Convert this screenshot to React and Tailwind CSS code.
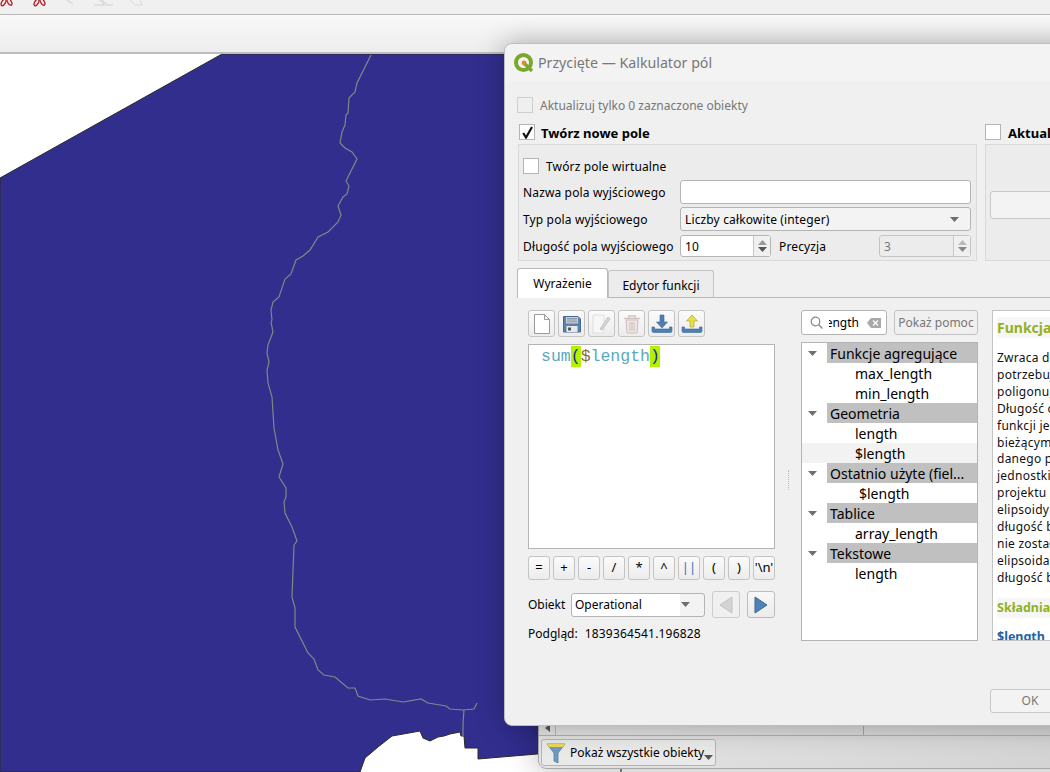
import React from "react";

const MAP_POLY = "222,54 1050,54 1050,754 537,754 478,759 478,748 465,748 464,736 461,736 460,732 450,734 444,736 438,737 430,741 423,738 420,731 392,736 378,747 365,758 360,772 0,772 0,178";
const BORDER = "371,55 365,67 357,83 355,92 349,98 348,113 346,115 345,125 342,132 340,143 345,148 352,152 357,159 346,181 349,186 347,194 343,197 338,206 341,215 338,222 328,232 318,237 310,250 303,256 296,260 291,274 285,279 279,297 273,302 271,310 272,320 271,322 273,332 268,345 267,353 269,362 267,370 268,383 272,397 274,428 278,450 283,464 279,477 286,488 286,497 284,502 285,513 292,527 297,541 294,545 292,597 295,608 295,627 308,653 314,659 318,670 324,675 335,677 348,688 355,688 358,696 370,700 385,699 403,702 421,699 428,703 446,706 450,709 463,710 474,709 477,703";
const BRANCH = "464,710 463,723 463,736";

const HELP_LINES = [
  "Zwraca długość linii. Jeżeli",
  "potrzebujesz długości obwodu",
  "poligonu, użyj $perimeter.",
  "Długość obliczona przez tę",
  "funkcji jest zgodna z",
  "bieżącymi ustawieniami",
  "danego projektu",
  "jednostki długości",
  "projektu i",
  "elipsoidy",
  "długość będzie",
  "nie została",
  "elipsoida",
  "długość będzie",
];

const TREE = [
  { label: "Funkcje agregujące", items: [{ t: "max_length" }, { t: "min_length" }] },
  { label: "Geometria", items: [{ t: "length" }, { t: "$length", hover: true }] },
  { label: "Ostatnio użyte (fiel...", items: [{ t: "$length", recent: true }] },
  { label: "Tablice", items: [{ t: "array_length" }] },
  { label: "Tekstowe", items: [{ t: "length" }] },
];

const CALC = ["=", "+", "-", "/", "*", "^", "||", "(", ")", "'\\n'"];

const Checkbox = ({ checked, muted }) => (
  <span className={`flex h-4 w-4 shrink-0 items-center justify-center border ${muted ? "border-[#cfcfcf] bg-[#efefef]" : "border-[#b4b4b4] bg-white"}`}>
    {checked && (
      <svg width="13" height="13" viewBox="0 0 13 13">
        <path d="M2.2 7 L5 11.5 L11 1" fill="none" stroke="#111" strokeWidth="2.2" />
      </svg>
    )}
  </span>
);

const Arrow = ({ up, color = "#6e6e6e" }) => (
  <svg width="9" height="5" viewBox="0 0 9 5">
    <path d={up ? "M0 5 L4.5 0 L9 5 Z" : "M0 0 L9 0 L4.5 5 Z"} fill={color} />
  </svg>
);

const SpinBox = ({ value, width, disabled }) => (
  <div className={`flex h-[22px] items-stretch rounded-[3px] border ${disabled ? "border-[#c4c4c4] bg-[#ececec] text-[#777]" : "border-[#b4b4b4] bg-white text-black"} ${width}`}>
    <span className="flex-1 pl-[4px] leading-[22px]">{value}</span>
    <span className="flex w-[17px] flex-col items-center justify-center gap-[2px] border-l border-[#c8c8c8] bg-[#f0f0f0]">
      <Arrow up color={disabled ? "#bbb" : "#999"} />
      <Arrow color={disabled ? "#888" : "#555"} />
    </span>
  </div>
);

const ToolButton = ({ children }) => (
  <button type="button" className="flex h-[27px] w-[27px] items-center justify-center rounded-[3px] border border-[#c4c4c4] bg-gradient-to-b from-[#fbfbfb] to-[#ececec]">
    {children}
  </button>
);

const SaveIcon = () => (
  <svg width="18" height="18" viewBox="0 0 18 18">
    <path d="M0.5 1.5 H15 L17.5 4 V17 H0.5 Z" fill="#5b82ac" stroke="#456b94" />
    <rect x="3" y="2" width="12" height="6.5" fill="#c9d0d8" />
    <path d="M4 3.5 H14 M4 5 H14 M4 6.8 H14" stroke="#7f8b98" strokeWidth="0.8" />
    <rect x="3.5" y="11" width="11" height="6" fill="#e8e8e8" />
    <rect x="5" y="12.5" width="3" height="3" fill="#555" />
  </svg>
);

const TrayIcon = ({ children }) => (
  <svg width="22" height="20" viewBox="0 0 22 20">
    {children}
    <path d="M1 13 V17 Q1 18.5 2.5 18.5 H19.5 Q21 18.5 21 17 V13 H18.5 V15 H3.5 V13 Z" fill="#4c7fb4" stroke="#3d6892" strokeWidth="0.6" />
  </svg>
);

const LoopGlyph = ({ x }) => (
  <g transform={`translate(${x} 0)`} fill="none" stroke="#b2272b" strokeWidth="1.4">
    <ellipse cx="3.5" cy="2.5" rx="1.8" ry="3.6" transform="rotate(30 3.5 2.5)" />
    <ellipse cx="9.5" cy="2" rx="1.8" ry="3.6" transform="rotate(-30 9.5 2)" />
  </g>
);

const App = () => {
  return (
    <div className="relative flex h-[772px] w-[1050px] flex-col overflow-hidden bg-white font-['Noto_Sans',sans-serif] text-[12px] text-black">
      {/* main window toolbars */}
      <div className="relative h-[15px] shrink-0 border-b border-[#b9b9b9] bg-[#f0f0f0]">
        <svg width="150" height="14" viewBox="0 0 150 14" className="absolute left-0 top-0">
          <LoopGlyph x={0} />
          <LoopGlyph x={33} />
          <path d="M67 0 L73 4" stroke="#d8d8d8" strokeWidth="1.2" fill="none" />
          <path d="M94 5 H113 M103 0 V5 M99 0 L107 4" stroke="#d2d2d2" strokeWidth="1" fill="none" />
          <path d="M130 0 L135 5 H142 L140 0" stroke="#dadada" strokeWidth="1" fill="none" />
        </svg>
      </div>
      <div className="h-[39px] shrink-0 border-b-2 border-[#bdbdbd] bg-gradient-to-b from-[#f9f9f9] to-[#ededed]" />

      {/* map canvas */}
      <div className="flex-1 bg-white">
        <svg width="1050" height="718" viewBox="0 54 1050 718" className="block">
          <polygon points={MAP_POLY} fill="#312e8e" stroke="#2a2a2a" strokeWidth="1" />
          <polyline points={BORDER} fill="none" stroke="#7c8a86" strokeWidth="1.2" />
          <polyline points={BRANCH} fill="none" stroke="#7c8a86" strokeWidth="1.2" />
          <path d="M621 769 V772" stroke="#111" strokeWidth="1" />
        </svg>
      </div>

      {/* attribute table window, behind the dialog */}
      <div className="absolute left-[538px] top-[700px] h-[69px] w-[560px] rounded-bl-[8px] border border-[#a8a8a8] bg-gradient-to-r from-[#e4e4e4] to-[#d2d2d2] shadow-[0_0_30px_rgba(0,0,0,0.3)]">
        <div className="flex h-[35px] border-b border-[#b0b0b0]">
          <div className="flex w-[17px] items-end justify-center border-r border-[#b8b8b8] pb-[3px]">
            <svg width="5" height="8" viewBox="0 0 5 8"><path d="M5 0 V8 L0 4 Z" fill="#555" /></svg>
          </div>
          <div className="w-[308px] border-r border-[#a8a8a8]" />
        </div>
        <div className="pl-[2px] pt-[3px]">
          <button type="button" className="relative flex h-[27px] w-[175px] items-center rounded-[3px] border border-[#b4b4b4] bg-[#e9e9e9] pl-[5px]">
            <svg width="18" height="20" viewBox="0 0 18 20" className="shrink-0">
              <path d="M0 1 H18 L11 10 V20 L7 18 V10 Z" fill="#6f9bc4" stroke="#4a7397" strokeWidth="0.7" />
              <path d="M0 1 H18 L16 4 H2 Z" fill="#ecd75c" />
            </svg>
            <span className="ml-[5px] whitespace-nowrap pt-px">Pokaż wszystkie obiekty</span>
            <span className="absolute bottom-[5px] right-[2px]"><Arrow color="#555" /></span>
          </button>
        </div>
      </div>

      {/* field calculator dialog */}
      <div className="absolute left-[504px] top-[43px] flex h-[683px] w-[720px] flex-col rounded-l-[8px] border border-[#bdbdbd] bg-[#f0f0f0] shadow-[0_0_28px_rgba(0,0,0,0.3)]">
        <div className="flex h-[37px] shrink-0 items-center rounded-tl-[8px] bg-[#f3f3f3] pl-[8px]">
          <svg width="22" height="22" viewBox="0 0 22 22">
            <circle cx="10.5" cy="10.5" r="7.5" fill="none" stroke="#79a82a" strokeWidth="4" />
            <path d="M11 11 L19 19" stroke="#79a82a" strokeWidth="3.4" />
            <circle cx="11" cy="11" r="2.4" fill="#e08a2b" />
          </svg>
          <span className="ml-[3px] text-[14.2px] text-[#787878]">Przycięte — Kalkulator pól</span>
        </div>

        <div className="flex flex-col pl-[12px] pt-[16px]">
          <div className="flex h-4 items-center gap-[7px] text-[#777]">
            <Checkbox muted />
            <span className="pt-[2px]">Aktualizuj tylko 0 zaznaczone obiekty</span>
          </div>

          <div className="ml-[1px] mt-[11px] flex gap-[8px]">
            <div className="flex w-[459px] flex-col">
              <div className="ml-[1px] flex h-4 items-center gap-[6px] font-bold">
                <Checkbox checked />
                <span className="pt-[3px] text-[13px]">Twórz nowe pole</span>
              </div>
              <div className="mt-[4px] flex h-[117px] flex-col border border-[#d9d9d9] bg-[#ececec] pl-[4px] pt-[13px] tracking-[0.14px]">
                <div className="flex h-4 items-center gap-[7px]">
                  <Checkbox />
                  <span className="pt-[2px]">Twórz pole wirtualne</span>
                </div>
                <div className="mt-[6px] flex h-6 items-center">
                  <span className="w-[157px] pt-[2px]">Nazwa pola wyjściowego</span>
                  <div className="h-6 w-[291px] rounded-[3px] border border-[#b4b4b4] bg-white" />
                </div>
                <div className="mt-[3px] flex h-6 items-center">
                  <span className="w-[157px] pt-[2px]">Typ pola wyjściowego</span>
                  <div className="flex h-6 w-[291px] items-center justify-between rounded-[3px] border border-[#b4b4b4] bg-[#f3f3f3] pl-[4px] pr-[11px]">
                    <span className="pt-[2px]">Liczby całkowite (integer)</span>
                    <Arrow />
                  </div>
                </div>
                <div className="mt-[4px] flex h-[22px] items-center">
                  <span className="w-[157px] whitespace-nowrap pt-[2px]">Długość pola wyjściowego</span>
                  <SpinBox value="10" width="w-[91px]" />
                  <span className="ml-[8px] w-[100px] pt-[2px]">Precyzja</span>
                  <SpinBox value="3" width="w-[92px]" disabled />
                </div>
              </div>
            </div>
            <div className="flex w-[230px] flex-col">
              <div className="flex h-4 items-center gap-[7px] font-bold">
                <Checkbox />
                <span className="pt-[3px] text-[13px]">Aktualizuj istniejące pole</span>
              </div>
              <div className="mt-[4px] flex h-[117px] flex-col justify-center border border-[#d9d9d9] bg-[#ececec] pl-[4px] pt-[4px]">
                <div className="h-[28px] w-[220px] rounded-[3px] border border-[#c8c8c8] bg-[#f3f3f3]" />
              </div>
            </div>
          </div>

          {/* tabs */}
          <div className="mt-[7px] flex h-[30px] items-end border-b border-[#b9b9b9]">
            <div className="-mb-px flex h-[30px] w-[91px] items-center justify-center rounded-t-[3px] border border-b-0 border-[#b9b9b9] bg-white pt-px">Wyrażenie</div>
            <div className="flex h-[27px] w-[106px] items-center justify-center rounded-t-[3px] border border-b-0 border-[#c4c4c4] bg-[#ececec] pt-[3px]">Edytor funkcji</div>
          </div>

          <div className="flex pl-[11px] pt-[12px]">
            <div className="flex w-[247px] flex-col">
              <div className="flex gap-[3px]">
                <ToolButton>
                  <svg width="16" height="20" viewBox="0 0 16 20">
                    <path d="M0.5 0.5 H10.5 L15.5 5.5 V19.5 H0.5 Z M10.5 0.5 V5.5 H15.5" fill="#fff" stroke="#9a9a9a" />
                  </svg>
                </ToolButton>
                <ToolButton><SaveIcon /></ToolButton>
                <ToolButton>
                  <svg width="20" height="20" viewBox="0 0 20 20">
                    <path d="M1 1 H12 V19 H1 Z" fill="#f7f7f7" stroke="#dedede" />
                    <path d="M8 15 L16 3 L18 5 L10 16 Z" fill="#d6d6d6" stroke="#c4c4c4" />
                  </svg>
                </ToolButton>
                <ToolButton>
                  <svg width="18" height="20" viewBox="0 0 18 20">
                    <path d="M1 4.5 H17 M6 4 V2 H12 V4" stroke="#d2c4c2" strokeWidth="1.5" fill="none" />
                    <path d="M3 6 H15 L14 19 H4 Z" fill="#eee6e4" stroke="#cdbfbd" />
                    <path d="M7 8 V17 M9 8 V17 M11 8 V17" stroke="#cdbfbd" />
                  </svg>
                </ToolButton>
                <ToolButton>
                  <TrayIcon>
                    <path d="M9 1 H13 V8 H16.5 L11 14 L5.5 8 H9 Z" fill="#4c7fb4" stroke="#3d6892" strokeWidth="0.6" />
                  </TrayIcon>
                </ToolButton>
                <ToolButton>
                  <TrayIcon>
                    <path d="M9 13 H13 V7 H16.5 L11 1 L5.5 7 H9 Z" fill="#e6df4a" stroke="#a49d2a" strokeWidth="0.6" />
                  </TrayIcon>
                </ToolButton>
              </div>

              <div className="mt-[7px] flex h-[205px] items-start border border-[#b4b4b4] bg-white pl-[12px] pt-px font-['Liberation_Mono',monospace] text-[16.5px] leading-[21px] text-[#5aa9bd]">
                <span>sum</span>
                <span className="bg-[#b2f400] text-[#2323a8]">(</span>
                <span className="text-[#8a6a40]">$</span>
                <span>length</span>
                <span className="bg-[#b2f400] text-[#2323a8]">)</span>
              </div>

              <div className="mt-[7px] flex gap-[3px]">
                {CALC.map((c) => (
                  <button key={c} type="button" className={`flex h-[24px] w-[22px] items-center justify-center rounded-[3px] border border-[#c4c4c4] bg-gradient-to-b from-[#fbfbfb] to-[#ececec] text-[13px] ${c === "||" ? "text-[#2f72b5]" : ""} ${c === "'\\n'" ? "text-[11.5px]" : ""}`}>
                    {c}
                  </button>
                ))}
              </div>

              <div className="mt-[11px] flex h-[27px] items-center">
                <span className="w-[43px]">Obiekt</span>
                <div className="flex h-[24px] w-[134px] items-center justify-between rounded-[3px] border border-[#b4b4b4] bg-[#f3f3f3] pr-[14px]">
                  <span className="flex h-full w-[108px] items-center rounded-l-[3px] bg-white pl-[3px]">Operational</span>
                  <Arrow />
                </div>
                <button type="button" className="ml-[7px] flex h-[27px] w-[28px] items-center justify-center rounded-[3px] border border-[#cccccc] bg-[#f0f0f0]">
                  <svg width="14" height="18" viewBox="0 0 14 18"><path d="M13 1 V17 L1 9 Z" fill="#d4d4d4" stroke="#c2c2c2" /></svg>
                </button>
                <button type="button" className="ml-[7px] flex h-[27px] w-[28px] items-center justify-center rounded-[3px] border border-[#bcbcbc] bg-gradient-to-b from-[#f8f8f8] to-[#ececec]">
                  <svg width="14" height="18" viewBox="0 0 14 18"><path d="M1 1 V17 L13 9 Z" fill="#4f82b8" stroke="#3d6790" /></svg>
                </button>
              </div>

              <div className="mt-[7px] flex gap-[7px] leading-[17px]">
                <span>Podgląd:</span>
                <span className="tracking-[0.18px]">1839364541.196828</span>
              </div>
            </div>

            {/* splitter */}
            <div className="flex w-[26px] shrink-0 justify-center pt-[160px]">
              <div className="h-[20px] border-l border-dotted border-[#bdbdbd]" />
            </div>

            <div className="flex w-[177px] shrink-0 flex-col">
              <div className="flex gap-[7px]">
                <div className="flex h-[25px] w-[86px] items-center rounded-[3px] border border-[#b4b4b4] bg-white pl-[8px]">
                  <svg width="13" height="13" viewBox="0 0 13 13" className="shrink-0">
                    <circle cx="5.5" cy="5.5" r="4.3" fill="none" stroke="#8a8a8a" strokeWidth="1.2" />
                    <path d="M8.6 8.6 L12.4 12.4" stroke="#8a8a8a" strokeWidth="1.4" />
                  </svg>
                  <div className="ml-[6px] flex w-[30px] justify-end overflow-hidden">
                    <span>length</span>
                  </div>
                  <svg width="14" height="10" viewBox="0 0 14 10" className="ml-[8px] shrink-0">
                    <path d="M0 5 L4 0 H14 V10 H4 Z" fill="#a8a8a8" />
                    <path d="M6 2.5 L11 7.5 M11 2.5 L6 7.5" stroke="#fff" strokeWidth="1.2" />
                  </svg>
                </div>
                <button type="button" className="h-[25px] w-[84px] whitespace-nowrap rounded-[3px] border border-[#c4c4c4] bg-[#f0f0f0] text-[#777]">Pokaż pomoc</button>
              </div>

              <div className="mt-[7px] h-[299px] border border-[#b4b4b4] bg-white text-[14px]">
                {TREE.map((group) => (
                  <div key={group.label}>
                    <div className="flex h-[20px] items-center">
                      <span className="flex w-[25px] justify-center pr-[5px]"><Arrow color="#707070" /></span>
                      <span className="flex h-full flex-1 items-center whitespace-nowrap bg-[#c0c0c0] pl-[3px]">{group.label}</span>
                    </div>
                    {group.items.map((item) => (
                      <div key={item.t} className={`flex h-[20px] items-center ${item.recent ? "pl-[57px]" : "pl-[53px]"} ${item.hover ? "bg-[#f2f2f2]" : ""}`}>{item.t}</div>
                    ))}
                  </div>
                ))}
              </div>
            </div>

            <div className="ml-[14px] h-[331px] w-[160px] shrink-0 overflow-hidden border border-[#c4c4c4] bg-white pl-[4px] pt-[6px]">
              <div className="bg-[#f6f6f6] text-[14px] font-bold leading-[21px] text-[#93b023]">Funkcja $length</div>
              <div className="mt-[12px] whitespace-nowrap leading-[16.9px] tracking-[0.25px] text-[#111]">
                {HELP_LINES.map((line, i) => (
                  <div key={i}>{line}</div>
                ))}
              </div>
              <div className="mt-[11px] bg-[#f6f6f6] text-[12.5px] font-bold leading-[20px] text-[#93b023]">Składnia</div>
              <div className="mt-[10px] text-[12.5px] font-bold leading-[17px] text-[#2163a8]">$length</div>
            </div>
          </div>

          <div className="mt-[47px] pl-[473px]">
            <button type="button" className="h-[24px] w-[80px] rounded-[3px] border border-[#c8c8c8] bg-[#f3f3f3] text-[#777]">OK</button>
          </div>
        </div>
      </div>
    </div>
  );
};

export default App;
